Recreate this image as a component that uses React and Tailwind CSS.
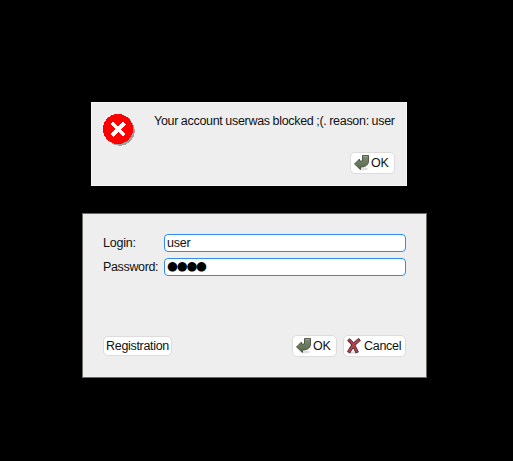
function ErrorIcon() {
  return (
    <svg width="32" height="32" viewBox="0 0 32 32" shapeRendering="crispEdges" className="shrink-0">
      <circle cx="16.7" cy="16.7" r="15" fill="#a0a0a0" />
      <circle cx="15" cy="15" r="15" fill="#ff0000" />
      <path d="M9 9L21.5 21.5M21.5 9L9 21.5" stroke="#fff" strokeWidth="3.8" />
    </svg>
  );
}

function OkIcon() {
  return (
    <svg width="16" height="16" viewBox="0 0 16 16" className="shrink-0">
      <defs>
        <linearGradient id="okFill" x1="0" y1="0" x2="0" y2="1">
          <stop offset="0" stopColor="#7e8a76" />
          <stop offset="1" stopColor="#566b45" />
        </linearGradient>
      </defs>
      <ellipse cx="9" cy="14" rx="5" ry="1.4" fill="#000" opacity="0.12" />
      <path
        d="M8.5 0.5H14.5V6C14.5 9.5 12 12 6.5 12V14.5L0.5 9L5.5 4V6H8.5Z"
        fill="url(#okFill)"
        stroke="#454f3f"
        strokeWidth="0.9"
        strokeLinejoin="round"
      />
      <path d="M9.5 1.5H13.5" stroke="#a3ad9a" strokeWidth="0.8" />
    </svg>
  );
}

function CancelIcon() {
  return (
    <svg width="16" height="16" viewBox="0 0 16 16" className="shrink-0">
      <ellipse cx="7" cy="14.4" rx="5.5" ry="1" fill="#000" opacity="0.15" />
      <path
        d="M3.6 2.6C6 4.6 8.6 9 10.6 13.2M12.4 2.4C8.8 5 5.6 9 3.4 13"
        fill="none"
        stroke="#46282e"
        strokeWidth="3.5"
        strokeLinecap="square"
      />
      <path
        d="M3.6 2.6C6 4.6 8.6 9 10.6 13.2M12.4 2.4C8.8 5 5.6 9 3.4 13"
        fill="none"
        stroke="#b04450"
        strokeWidth="2"
        strokeLinecap="square"
      />
    </svg>
  );
}

const button =
  "flex items-center rounded-[5px] border border-[#dcdcdc] bg-white whitespace-nowrap";
const field =
  "flex h-[18px] w-[242px] items-center rounded-[4px] border border-[#308cf0] bg-white pl-[2px]";

function OkButton() {
  return (
    <button className={`${button} h-[22px] w-[45px] pl-[3px]`}>
      <OkIcon />
      <span className="ml-px tracking-[-0.3px]">OK</span>
    </button>
  );
}

export default function App() {
  return (
    <div className="flex h-[461px] w-[513px] flex-col bg-black pt-[102px] font-['Liberation_Sans',Arial,sans-serif] text-[12.5px] leading-[14px] tracking-[-0.22px] text-[#111]">
      <section className="ml-[91px] flex h-[84px] w-[316px] flex-col items-end border border-[#f6f6f6] bg-[#eeeeee] pt-[11px] pr-[11px] pl-[11px]">
        <div className="flex h-[32px] w-full items-start">
          <ErrorIcon />
          <p className="ml-[19px] tracking-[-0.3px] whitespace-nowrap [word-spacing:-0.4px]">
            Your account userwas blocked ;(. reason: user
          </p>
        </div>
        <div className="mt-[6px]">
          <OkButton />
        </div>
      </section>

      <section className="mt-[27px] ml-[82px] flex h-[165px] w-[345px] flex-col justify-between border border-[#706a5c] bg-[#eeeeee] pt-[20px] pr-[20px] pb-[20px] pl-[20px]">
        <div className="flex flex-col gap-[6px]">
          <label className="flex items-center justify-between">
            Login:
            <span className={field}>user</span>
          </label>
          <label className="flex items-center justify-between">
            <span className="tracking-[-0.35px]">Password:</span>
            <span className={field}>
              <span className="mb-[2px] font-['DejaVu_Sans',sans-serif] text-[12.5px] tracking-[-1.2px] text-black">
                ●●●●
              </span>
            </span>
          </label>
        </div>
        <div className="flex items-center">
          <button className={`${button} h-[20px] w-[69px] justify-center tracking-[-0.32px]`}>
            Registration
          </button>
          <div className="ml-auto flex gap-[6px]">
            <OkButton />
            <button className={`${button} h-[22px] w-[63px] pl-[2px]`}>
              <CancelIcon />
              <span className="ml-[2px] tracking-[-0.3px]">Cancel</span>
            </button>
          </div>
        </div>
      </section>
    </div>
  );
}
